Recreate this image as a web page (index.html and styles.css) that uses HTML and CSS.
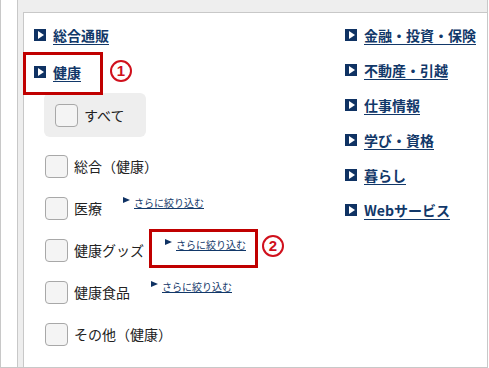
FILE: index.html
```html
<!DOCTYPE html>
<html lang="ja">
<head>
    <meta charset="UTF-8">
    <meta name="viewport" content="width=device-width, initial-scale=1.0">
    <title>カテゴリ選択</title>
    <link rel="stylesheet" href="styles.css">
</head>
<body>
    <div class="frame">
        <div class="panel">
            <div class="content">
                <div class="col col-left">
                    <a href="#" class="cat"><span class="cat-icon"></span>総合通販</a>
                    <a href="#" class="cat cat-open"><span class="cat-icon"></span>健康</a>

                    <div class="check-all">
                        <label class="check"><span class="box"></span>すべて</label>
                    </div>

                    <ul class="sub-list">
                        <li><label class="check"><span class="box"></span>総合（健康）</label></li>
                        <li>
                            <label class="check"><span class="box"></span>医療</label>
                            <a href="#" class="more"><span class="more-arrow"></span>さらに絞り込む</a>
                        </li>
                        <li>
                            <label class="check"><span class="box"></span>健康グッズ</label>
                            <a href="#" class="more"><span class="more-arrow"></span>さらに絞り込む</a>
                        </li>
                        <li>
                            <label class="check"><span class="box"></span>健康食品</label>
                            <a href="#" class="more"><span class="more-arrow"></span>さらに絞り込む</a>
                        </li>
                        <li><label class="check"><span class="box"></span>その他（健康）</label></li>
                    </ul>
                </div>

                <div class="col col-right">
                    <a href="#" class="cat"><span class="cat-icon"></span>金融・投資・保険</a>
                    <a href="#" class="cat"><span class="cat-icon"></span>不動産・引越</a>
                    <a href="#" class="cat"><span class="cat-icon"></span>仕事情報</a>
                    <a href="#" class="cat"><span class="cat-icon"></span>学び・資格</a>
                    <a href="#" class="cat"><span class="cat-icon"></span>暮らし</a>
                    <a href="#" class="cat"><span class="cat-icon"></span>Webサービス</a>
                </div>
            </div>
        </div>

        <!-- annotations -->
        <div class="mark mark-1"></div>
        <div class="num num-1">1</div>
        <div class="mark mark-2"></div>
        <div class="num num-2">2</div>
    </div>
</body>
</html>
```

FILE: styles.css
```css
:root {
    --navy: #123869;
    --navy-dark: #0f3263;
    --line: #c8c8c8;
    --band: #eeeeee;
    --red: #c00000;
}

* {
    margin: 0;
    padding: 0;
    box-sizing: border-box;
}

body {
    background: #fff;
    font-family: 'Noto Sans CJK JP', 'Noto Sans', sans-serif;
    color: #222;
}

.frame {
    position: relative;
    width: 488px;
    height: 368px;
    border: 1px solid var(--line);
    border-top: none;
    padding-left: 16px;
    display: flex;
}

.panel {
    flex: 1;
    background: var(--band);
    border-left: 1px solid var(--line);
    padding: 12px 0 0 5px;
    display: flex;
}

.content {
    flex: 1;
    background: #fff;
    border-top: 1px solid var(--line);
    border-left: 1px solid var(--line);
    padding: 12px 0 0 10px;
    display: flex;
}

.col-left {
    width: 311px;
}

.col {
    display: flex;
    flex-direction: column;
    align-items: flex-start;
}

/* category links */
.cat {
    display: flex;
    align-items: center;
    gap: 7px;
    height: 20px;
    font-size: 14px;
    font-weight: bold;
    line-height: 20px;
    color: var(--navy);
    text-decoration: underline;
    text-underline-offset: 3px;
}

.col-right .cat {
    margin-bottom: 15px;
}

.cat-open {
    margin-top: 17px;
}

.cat-icon {
    position: relative;
    width: 12px;
    height: 12px;
    background: var(--navy-dark);
    flex-shrink: 0;
}

.cat-icon::after {
    content: "";
    position: absolute;
    left: 4px;
    top: 2px;
    border-left: 6px solid #fff;
    border-top: 4px solid transparent;
    border-bottom: 4px solid transparent;
}

/* checkboxes */
.check-all {
    margin: 11px 0 0 10px;
    width: 102px;
    height: 44px;
    background: var(--band);
    border-radius: 6px;
    padding-left: 11px;
    display: flex;
    align-items: center;
}

.check {
    display: flex;
    align-items: center;
    gap: 6px;
    font-size: 14px;
    line-height: 23px;
    color: #222;
}

.box {
    width: 23px;
    height: 23px;
    border: 1.5px solid #a8a8a8;
    border-radius: 4px;
    background: #f4f4f4;
    flex-shrink: 0;
}

.sub-list {
    list-style: none;
    margin: 18px 0 0 11px;
}

.sub-list li {
    display: flex;
    align-items: center;
    height: 23px;
    margin-bottom: 19px;
}

.more {
    display: flex;
    align-items: flex-start;
    gap: 4px;
    margin: 0 0 12px 21px;
    font-size: 10px;
    line-height: 12px;
    color: var(--navy);
    text-decoration: underline;
}

.more-arrow {
    border-left: 7px solid var(--navy-dark);
    border-top: 3px solid transparent;
    border-bottom: 3px solid transparent;
}

/* red annotations */
.mark {
    position: absolute;
    border: 3px solid var(--red);
}

.mark-1 {
    left: 22px;
    top: 52px;
    width: 80px;
    height: 43px;
}

.mark-2 {
    left: 148px;
    top: 229px;
    width: 109px;
    height: 39px;
}

.num {
    position: absolute;
    width: 22px;
    height: 22px;
    border: 2px solid #d0101c;
    border-radius: 50%;
    color: #d0101c;
    font-family: 'Liberation Sans', sans-serif;
    font-size: 15px;
    font-weight: bold;
    line-height: 18px;
    text-align: center;
}

.num-1 {
    left: 109px;
    top: 60px;
}

.num-2 {
    left: 261px;
    top: 235px;
}
```
